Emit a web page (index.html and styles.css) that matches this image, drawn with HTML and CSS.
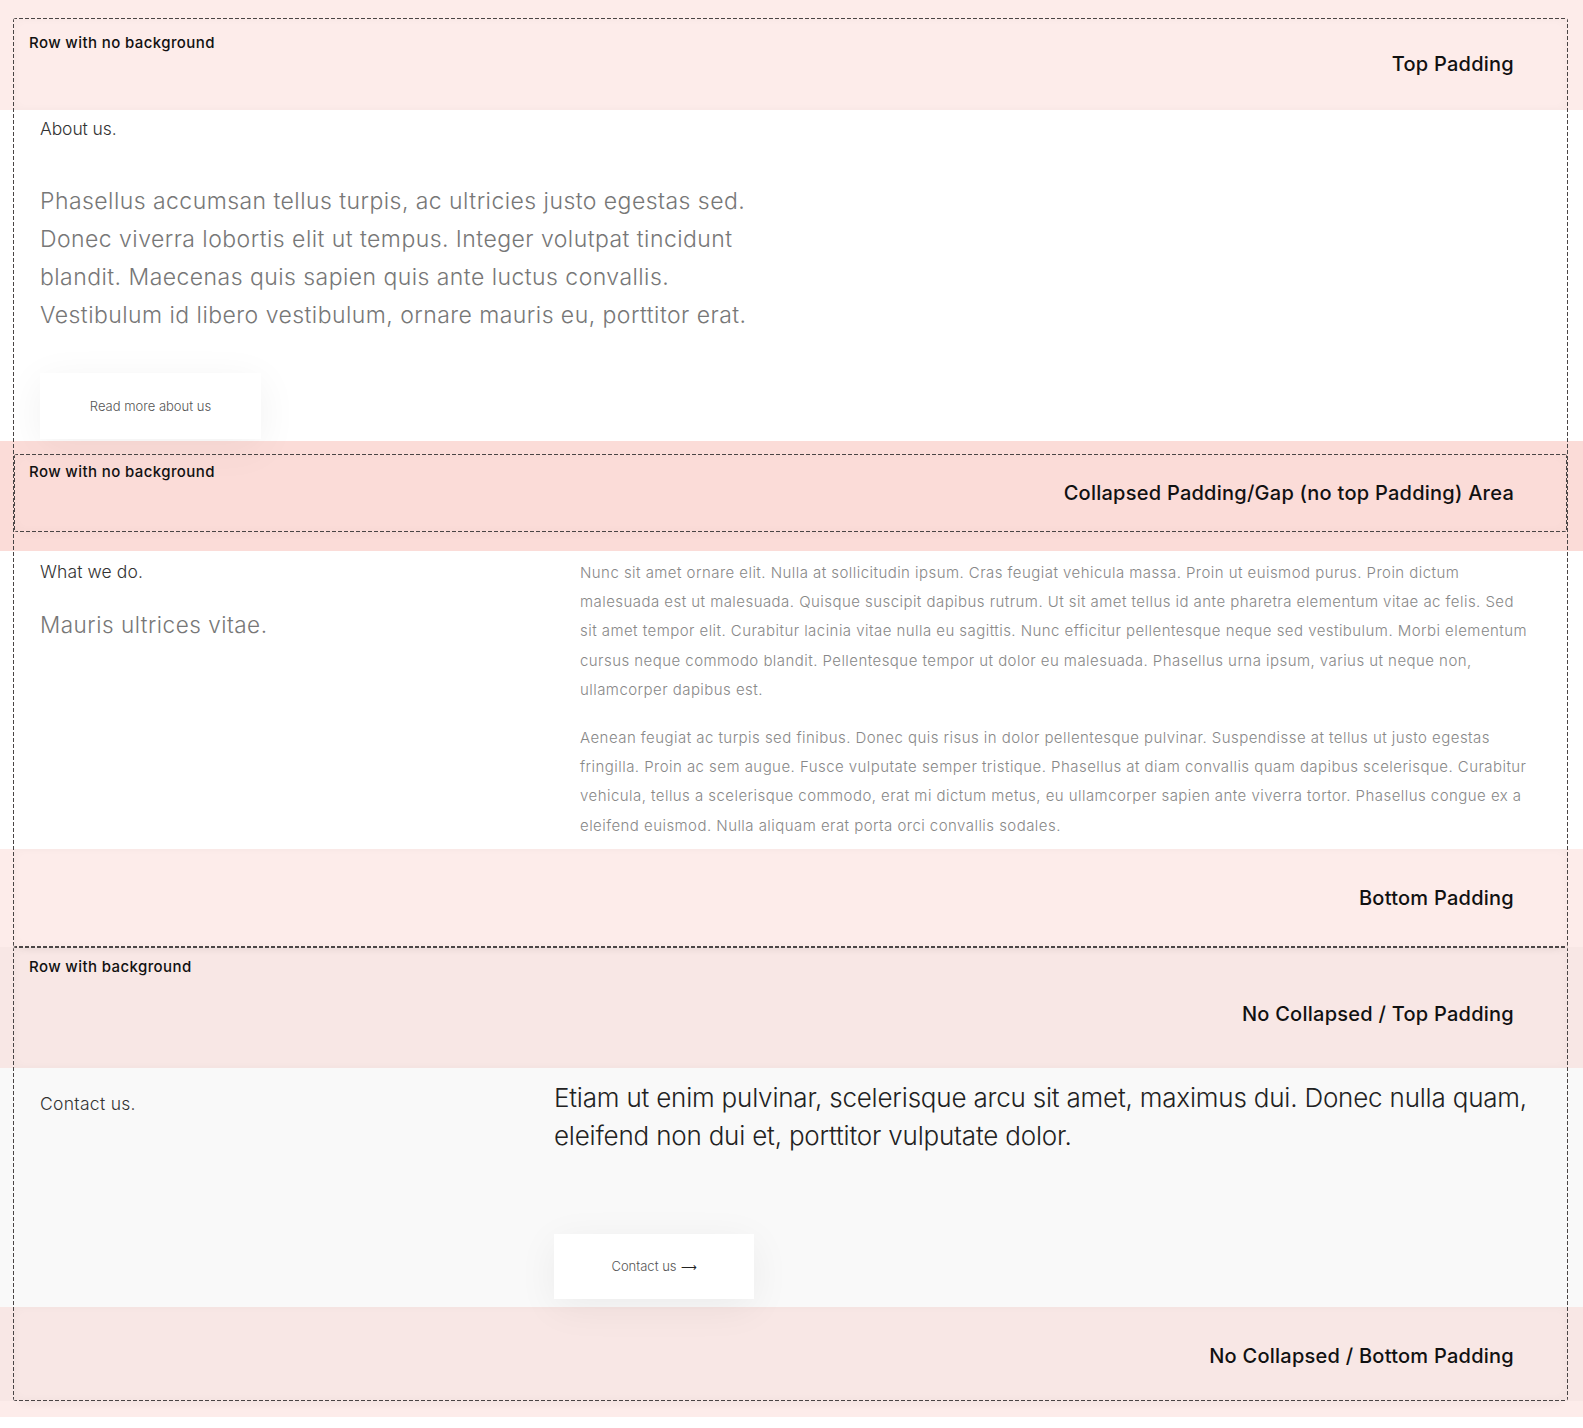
FILE: index.html
```html
<!DOCTYPE html>
<html lang="en">
<head>
<meta charset="utf-8">
<title>Rows</title>
<link rel="stylesheet" href="styles.css">
</head>
<body>
<main class="canvas">
  <section class="row row--outer">
    <span class="badge badge--outer">Row with no background</span>
    <div class="pad pad--top-first">
      <span class="pad-tag">Top Padding</span>
    </div>

    <div class="content content--about">
      <h2 class="eyebrow">About us.</h2>
      <p class="lead">Phasellus accumsan tellus turpis, ac ultricies justo egestas sed.<br>Donec viverra lobortis elit ut tempus. Integer volutpat tincidunt<br>blandit. Maecenas quis sapien quis ante luctus convallis.<br>Vestibulum id libero vestibulum, ornare mauris eu, porttitor erat.</p>
      <a class="btn btn--about" href="#">Read more about us</a>
    </div>

    <section class="row row--nested">
      <span class="badge badge--nested">Row with no background</span>
      <div class="pad pad--collapsed">
        <span class="pad-tag">Collapsed Padding/Gap (no top Padding) Area</span>
      </div>
    </section>

    <div class="content content--split content--what">
      <div class="col-left">
        <h2 class="eyebrow eyebrow--wide">What we do.</h2>
        <p class="sub">Mauris ultrices vitae.</p>
      </div>
      <div class="col-right">
        <p class="body">Nunc sit amet ornare elit. Nulla at sollicitudin ipsum. Cras feugiat vehicula massa. Proin ut euismod purus. Proin dictum<br>malesuada est ut malesuada. Quisque suscipit dapibus rutrum. Ut sit amet tellus id ante pharetra elementum vitae ac felis. Sed<br>sit amet tempor elit. Curabitur lacinia vitae nulla eu sagittis. Nunc efficitur pellentesque neque sed vestibulum. Morbi elementum<br>cursus neque commodo blandit. Pellentesque tempor ut dolor eu malesuada. Phasellus urna ipsum, varius ut neque non,<br>ullamcorper dapibus est.</p>
        <p class="body">Aenean feugiat ac turpis sed finibus. Donec quis risus in dolor pellentesque pulvinar. Suspendisse at tellus ut justo egestas<br>fringilla. Proin ac sem augue. Fusce vulputate semper tristique. Phasellus at diam convallis quam dapibus scelerisque. Curabitur<br>vehicula, tellus a scelerisque commodo, erat mi dictum metus, eu ullamcorper sapien ante viverra tortor. Phasellus congue ex a<br>eleifend euismod. Nulla aliquam erat porta orci convallis sodales.</p>
      </div>
    </div>

    <div class="pad pad--bottom-first">
      <span class="pad-tag">Bottom Padding</span>
    </div>
  </section>

  <div class="band band--bg">
    <section class="row row--second">
      <span class="badge badge--second">Row with background</span>
      <div class="pad pad--top-second">
        <span class="pad-tag">No Collapsed / Top Padding</span>
      </div>

      <div class="content content--split content--contact">
        <div class="col-left">
          <h2 class="eyebrow eyebrow--wider">Contact us.</h2>
        </div>
        <div class="col-right">
          <p class="big">Etiam ut enim pulvinar, scelerisque arcu sit amet, maximus dui. Donec nulla quam,<br>eleifend non dui et, porttitor vulputate dolor.</p>
          <a class="btn btn--contact" href="#">Contact us <span class="arrow">&#10230;</span></a>
        </div>
      </div>

      <div class="pad pad--bottom-second">
        <span class="pad-tag">No Collapsed / Bottom Padding</span>
      </div>
    </section>
  </div>
</main>
</body>
</html>
```

FILE: styles.css
```css
* { box-sizing: border-box; }

html, body {
  margin: 0;
  padding: 0;
  background: #ffffff;
}

body {
  font-family: "Inter", "Open Sans", "Liberation Sans", sans-serif;
  color: #111111;
}

.canvas {
  display: flex;
  flex-direction: column;
  min-height: 1428px;
}

/* ---------- rows (dashed editor frames) ---------- */
.row {
  position: relative;
  border: 1px solid transparent;
  border-radius: 3px;
}

/* dashed outline drawn as an overlay above the row contents */
.row::after {
  content: "";
  position: absolute;
  top: -1px;
  left: -1px;
  right: -1px;
  bottom: -1px;
  border-radius: 3px;
  pointer-events: none;
  z-index: 3;
  background:
    repeating-linear-gradient(90deg, #4a4545 0 4px, transparent 4px 6px) left top / 100% 1px no-repeat,
    repeating-linear-gradient(90deg, #4a4545 0 4px, transparent 4px 6px) left bottom / 100% 1px no-repeat,
    repeating-linear-gradient(180deg, #4a4545 0 4px, transparent 4px 6px) left top / 1px 100% no-repeat,
    repeating-linear-gradient(180deg, #4a4545 0 4px, transparent 4px 6px) right top / 1px 100% no-repeat;
}

.row--outer {
  margin: 18px 15px 0 13px;
  box-shadow: 0 9px 8px -7px rgba(0, 0, 0, 0.06);
}

.row--nested {
  margin: 13px 0 19px 0;
  box-shadow: 0 9px 8px -7px rgba(0, 0, 0, 0.04);
}

.band--bg {
  background: #f9f9f9;
}

.row--second {
  margin: 0 15px 0 13px;
  box-shadow: 0 9px 8px -7px rgba(0, 0, 0, 0.06);
}

/* ---------- badges ---------- */
.badge {
  position: absolute;
  left: 15px;
  z-index: 2;
  font-size: 15px;
  line-height: 20px;
  letter-spacing: 0.4px;
  font-weight: 500;
  color: #111;
  white-space: nowrap;
}
.badge--outer { top: 14px; }
.badge--nested { top: 7px; left: 14px; }
.badge--second { top: 9px; }

/* ---------- padding visualisations ---------- */
.pad {
  position: relative;
  display: flex;
  justify-content: flex-end;
  align-items: center;
  padding-right: 53px;
  box-shadow: inset 0 0 10px rgba(0, 0, 0, 0.03);
}
.pad::before {
  content: "";
  position: absolute;
  left: -14px;
  right: -16px;
  top: 0;
  bottom: 0;
  background: rgba(242, 128, 115, 0.15);
  pointer-events: none;
}
.pad-tag {
  position: relative;
  font-size: 20px;
  line-height: 26px;
  letter-spacing: 0.25px;
  font-weight: 500;
  color: #111;
  white-space: nowrap;
}

.pad--top-first { height: 91px; padding-bottom: 2px; }
.pad--top-first::before { top: -19px; }

.pad--collapsed { height: 76px; padding-right: 52px; }
.pad--collapsed::before {
  top: -14px;
  bottom: -20px;
  left: -15px;
  right: -17px;
  background: rgba(242, 128, 115, 0.28);
}

.pad--bottom-first { height: 97px; padding-top: 2px; }
.pad--bottom-first::before { bottom: -14px; }

.pad--top-second { height: 120px; padding-top: 12px; }
.pad--top-second::before { top: 12px; }

.pad--bottom-second { height: 93px; padding-top: 6px; }
.pad--bottom-second::before { bottom: -17px; }

/* ---------- content ---------- */
.content {
  padding: 0 26px;
}

.eyebrow {
  margin: 0;
  font-size: 17.5px;
  line-height: 24px;
  font-weight: 300;
  letter-spacing: -0.1px;
  color: #333;
}
.eyebrow--wide { letter-spacing: 0.1px; }
.eyebrow--wider { letter-spacing: 0.3px; }

.content--about {
  padding-top: 7px;
  padding-bottom: 2px;
}

.lead {
  margin: 41px 0 0;
  font-size: 23px;
  line-height: 38px;
  font-weight: 300;
  letter-spacing: 0.45px;
  color: #777;
}

.btn {
  display: flex;
  align-items: center;
  justify-content: center;
  background: #fff;
  color: #555;
  text-decoration: none;
  font-size: 13px;
  font-weight: 300;
  box-shadow: 0 8px 40px rgba(0, 0, 0, 0.06);
}
.btn--about {
  width: 221px;
  height: 66px;
  margin-top: 39px;
}

.content--split {
  display: grid;
  grid-template-columns: 514px 1fr;
}

.content--what {
  padding-top: 9px;
  padding-bottom: 9px;
}
.content--what .col-right {
  padding-left: 26px;
  margin-top: -2px;
}

.sub {
  margin: 25px 0 0;
  font-size: 22.5px;
  line-height: 32px;
  font-weight: 300;
  letter-spacing: 0.5px;
  color: #777;
}

.body {
  margin: 0;
  font-size: 15px;
  line-height: 29.2px;
  font-weight: 300;
  letter-spacing: 0.45px;
  color: #888;
  white-space: nowrap;
}
.body + .body { margin-top: 19px; }

.content--contact {
  padding-top: 10px;
  padding-bottom: 8px;
}
.content--contact .col-left { padding-top: 14px; }
.content--contact .col-right { padding-top: 1px; }

.big {
  margin: 0;
  font-size: 26px;
  line-height: 38px;
  font-weight: 300;
  letter-spacing: -0.2px;
  color: #222;
  white-space: nowrap;
}

.btn--contact {
  width: 200px;
  height: 65px;
  margin-top: 79px;
  gap: 4px;
}
.arrow {
  font-family: "DejaVu Sans", sans-serif;
  color: #222;
  font-size: 11px;
  position: relative;
  top: 1px;
}
```
